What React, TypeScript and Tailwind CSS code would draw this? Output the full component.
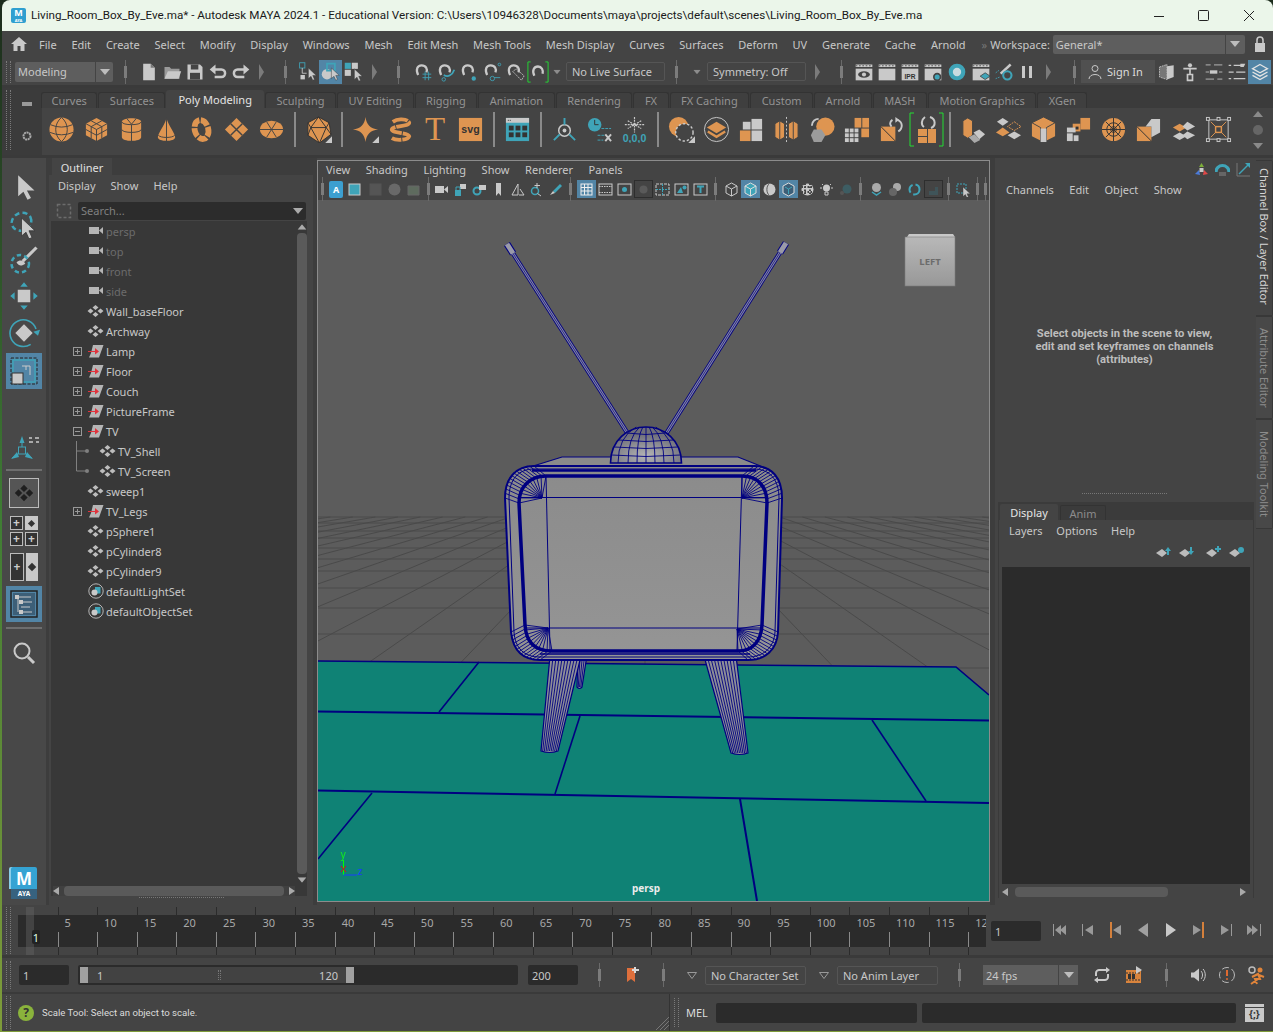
import type { ReactNode } from 'react';

const OR = '#de9551';
const GR = '#c9c9c9';
const TE = '#3fa4b8';
const BG = '#444444';
const NAVY = '#000080';

const Ic = ({ s = 20, vb = 24, children }: { s?: number; vb?: number; children: ReactNode }) => (
  <svg width={s} height={s} viewBox={`0 0 ${vb} ${vb}`} fill="none" className="shrink-0">
    {children}
  </svg>
);

const Sep = ({ className = '' }: { className?: string }) => (
  <div className={`flex h-[24px] w-[5px] shrink-0 items-center justify-center ${className}`}>
    <div className="relative flex h-full w-px items-center justify-center bg-[#6a6a6a]">
      <div className="absolute h-[12px] w-[3px] bg-[#7c7c7c]" />
    </div>
  </div>
);

const Grip = ({ className = '' }: { className?: string }) => (
  <div className={`w-[5px] shrink-0 border-x border-dotted border-[#7a7a7a] ${className}`} />
);

const Chevron = ({ className = '' }: { className?: string }) => (
  <svg width="6" height="18" viewBox="0 0 6 18" className={`shrink-0 ${className}`}>
    <path d="M0 1 L5 9 L0 17 Z" fill="#7b7b7b" />
  </svg>
);

const DownTri = ({ className = '', c = '#8c8c8c' }: { className?: string; c?: string }) => (
  <svg width="10" height="6" viewBox="0 0 10 6" className={`shrink-0 ${className}`}>
    <path d="M0 0 H10 L5 6 Z" fill={c} />
  </svg>
);

const Cursor = ({ x = 10, y = 9, k = 1 }: { x?: number; y?: number; k?: number }) => (
  <path transform={`translate(${x} ${y}) scale(${k})`} d="M0 0 L0 12 L3 9.5 L5 14 L7 13 L5 8.5 L9 8.5 Z" fill={GR} stroke="#333" strokeWidth=".5" />
);

const Magnet = ({ extra }: { extra?: ReactNode }) => (
  <Ic s={21}>
    <path d="M7 16 C4 10 6 5 11 5 C16 5 18 9 16.5 13" stroke={GR} strokeWidth="2.6" />
    {extra}
  </Ic>
);

const Clap = ({ children }: { children?: ReactNode }) => (
  <Ic s={20}>
    <rect x="2" y="3" width="20" height="3" fill={GR} strokeDasharray="2 2" />
    <path d="M2 4.5 H22" stroke="#444" strokeWidth="1" strokeDasharray="2 2" />
    <rect x="2" y="8" width="20" height="14" fill={GR} />
    {children}
  </Ic>
);

const statusIcons: Record<string, ReactNode> = {
  file: (
    <Ic s={20}>
      <path d="M5 2 H14 L19 7 V22 H5 Z" fill={GR} />
      <path d="M14 2 V7 H19" fill="#777" />
    </Ic>
  ),
  folder: (
    <Ic s={20}>
      <path d="M3 6 H9 L11 8 H21 V20 H3 Z" fill="#9a9a9a" />
      <path d="M3 20 L7 11 H23 L20 20 Z" fill={GR} />
    </Ic>
  ),
  save: (
    <Ic s={20}>
      <path d="M3 3 H18 L21 6 V21 H3 Z" fill={GR} />
      <rect x="7" y="3" width="9" height="6" fill="#444" />
      <rect x="6" y="13" width="12" height="8" fill="#444" />
    </Ic>
  ),
  undo: (
    <Ic s={20}>
      <path d="M7 9 H16 C22 9 22 18 16 18 H8" stroke={GR} strokeWidth="3" />
      <path d="M9 3 L2 9 L9 15 Z" fill={GR} />
    </Ic>
  ),
  redo: (
    <Ic s={20}>
      <path d="M17 9 H8 C2 9 2 18 8 18 H16" stroke={GR} strokeWidth="3" />
      <path d="M15 3 L22 9 L15 15 Z" fill={GR} />
    </Ic>
  ),
};

const ShelfTri = () => <path d="M28 21 V28 H21 Z" fill={GR} />;

const shelf: Record<string, ReactNode> = {
  sphere: (
    <>
      <circle cx="14" cy="14" r="12.5" fill={OR} />
      <path d="M14 1.5 C6 8 6 20 14 26.5 M14 1.5 C22 8 22 20 14 26.5 M2.5 9 Q14 14 25.5 9 M2 17 Q14 22 26 17" stroke={BG} />
    </>
  ),
  cube: (
    <>
      <path d="M14 2 L25 8 V20 L14 26 L3 20 V8 Z" fill={OR} />
      <path d="M3 8 L14 14 L25 8 M14 14 V26 M8.5 5 L19.5 11 V23 M19.5 5 L8.5 11 V23 M3 14 L14 20 L25 14" stroke={BG} />
    </>
  ),
  cyl: (
    <>
      <path d="M4 6 C4 1 24 1 24 6 V22 C24 27 4 27 4 22 Z" fill={OR} />
      <path d="M4 6 C4 10 24 10 24 6 M4 14 C4 18 24 18 24 14 M14 9 V26 M9 2.5 L14 8.5 L19 2.5" stroke={BG} />
    </>
  ),
  cone: (
    <>
      <path d="M14 2 C12 10 5 18 5 22 C5 27 23 27 23 22 C23 18 16 10 14 2 Z" fill={OR} />
      <path d="M14 2 V26 M5.5 20 C8 23 20 23 22.5 20" stroke={BG} />
    </>
  ),
  torus: <ellipse cx="14" cy="14" rx="7" ry="10" stroke={OR} strokeWidth="6" strokeDasharray="9 1.5" transform="rotate(-15 14 14)" />,
  plane: (
    <>
      <path d="M14 2 L26 14 L14 26 L2 14 Z" fill={OR} />
      <path d="M8 8 L20 20 M20 8 L8 20" stroke={BG} strokeWidth="1.5" />
    </>
  ),
  disc: (
    <>
      <ellipse cx="14" cy="14" rx="12" ry="9" fill={OR} />
      <path d="M2 14 H26 M9 6 L19 22 M19 6 L9 22" stroke={BG} />
    </>
  ),
  platonic: (
    <>
      <path d="M14 1 L25 7 L27 19 L15 28 L3 20 L3 7 Z" fill={OR} stroke="#333" />
      <path d="M14 1 L6 12 L22 12 Z M6 12 L15 28 L22 12 M3 7 L6 12 M25 7 L22 12 M3 20 L6 12 M27 19 L22 12" stroke="#333" />
      <ShelfTri />
    </>
  ),
  star: (
    <>
      <path d="M14 1 C15 9 19 13 27 14 C19 15 15 19 14 27 C13 19 9 15 1 14 C9 13 13 9 14 1 Z" fill={OR} />
      <ShelfTri />
    </>
  ),
  helix: <path d="M6 6 C12 2 22 3 23 7 C23 11 6 10 5 14 C5 18 22 17 23 21 C22 25 10 26 5 23" stroke={OR} strokeWidth="4" strokeDasharray="16 1" />,
  svg: (
    <>
      <rect x="2" y="2" width="24" height="24" fill={OR} />
      <text x="14" y="18" textAnchor="middle" fill="#333" fontSize="11" fontWeight="700" fontFamily="'Liberation Sans', sans-serif">
        svg
      </text>
    </>
  ),
  win: (
    <>
      <rect x="2" y="2" width="24" height="24" fill={TE} />
      <rect x="2" y="2" width="24" height="5" fill={GR} />
      <path d="M4 4.5 H8" stroke="#333" strokeDasharray="1 1" />
      {[5, 12, 19].map((x) => [10, 17].map((y) => <rect key={`${x}${y}`} x={x} y={y} width="5" height="5" fill="#333" />))}
    </>
  ),
  joint: (
    <>
      <circle cx="14" cy="15" r="6" stroke={GR} strokeWidth="1.5" />
      <circle cx="14" cy="15" r="2" fill={GR} />
      <path d="M14 2 V9 M9 19 L3 25 M19 19 L25 25" stroke={TE} strokeWidth="2" />
    </>
  ),
  clock: (
    <>
      <circle cx="9" cy="9" r="7" fill={TE} />
      <path d="M9 4 V9 H13" stroke="#333" />
      <path d="M16 13 H26 M12 20 H19 M12 25 H18" stroke={TE} strokeDasharray="3 1" />
      <path d="M20 19 L26 26 M26 19 L20 26" stroke={GR} strokeWidth="2" />
    </>
  ),
  snow: (
    <>
      <path d="M14 1 V17 M7 5 L21 13 M21 5 L7 13 M4 9 H24" stroke={GR} strokeWidth="1.2" strokeDasharray="2 1" />
      <text x="14" y="27" textAnchor="middle" fill={TE} fontSize="11" fontWeight="700" fontFamily="'Liberation Sans', sans-serif">
        0,0,0
      </text>
    </>
  ),
  circ: (
    <>
      <circle cx="11" cy="11" r="10" fill={OR} />
      <circle cx="17" cy="17" r="9" fill={BG} stroke={GR} strokeWidth="1.5" strokeDasharray="2.5 2" />
      <ShelfTri />
    </>
  ),
  stackC: (
    <>
      <circle cx="14" cy="14" r="12.5" stroke={GR} />
      <path d="M14 6 L24 12 L14 18 L4 12 Z" fill={OR} />
      <path d="M5 16 L14 21.5 L23 16" stroke={OR} strokeWidth="2.5" />
    </>
  ),
  quad: (
    <>
      <rect x="14" y="3" width="11" height="11" fill={GR} />
      <rect x="14" y="15" width="11" height="11" fill={GR} />
      <rect x="2" y="15" width="11" height="11" fill={OR} />
      <rect x="5" y="6" width="8" height="8" fill={GR} />
    </>
  ),
  split: (
    <>
      <path d="M2 8 L7 5 L12 8 V22 L7 25 L2 22 Z" fill={OR} stroke={BG} />
      <path d="M7 5 V25" stroke={BG} />
      <path d="M16 8 L21 5 L26 8 V22 L21 25 L16 22 Z" fill={OR} stroke={BG} />
      <path d="M21 5 V25" stroke={BG} />
      <path d="M14 1 V27" stroke={GR} strokeDasharray="2 2" />
    </>
  ),
  bool: (
    <>
      <circle cx="18" cy="11" r="9.5" fill={OR} />
      <path d="M6 14 H14 L18 20 L14 27 H6 L3 20 Z" fill="#9c9c9c" />
      <path d="M4 10 C4 5 8 3 11 3" stroke={GR} strokeWidth="2" />
    </>
  ),
  smooth: (
    <>
      <g fill={GR}>
        {[3, 8, 13].map((x) => [14, 19, 24].map((y) => <rect key={`${x}${y}`} x={x - 1} y={y - 1} width="4" height="4" />))}
      </g>
      <rect x="12" y="2" width="7" height="10" fill={OR} />
      <rect x="20" y="2" width="7" height="10" fill={OR} />
      <rect x="19" y="13" width="8" height="9" fill={OR} />
    </>
  ),
  tri: (
    <>
      <rect x="3" y="11" width="15" height="15" fill={OR} />
      <path d="M3 11 L18 26" stroke="#333" />
      <path d="M20 4 C26 6 26 13 21 16 M15 4 C12 6 12 9 14 11" stroke={GR} strokeWidth="2" />
      <path d="M18 1 L22 4 L18 7 Z" fill={GR} />
    </>
  ),
  extrude: (
    <>
      <path d="M3 5 L8 2 L13 5 V20 L8 23 L3 20 Z" fill={OR} stroke={BG} />
      <path d="M14 17 L20 14 L26 19 L20 24 Z" fill={GR} />
      <path d="M9 22 L15 19 L21 25 L15 28 Z" fill="#aaa" />
    </>
  ),
  bridge: (
    <>
      <path d="M8 2 L14 6 L8 10 L2 6 Z" fill={GR} />
      <path d="M20 6 L27 11 L20 15 L13 11 Z" stroke={OR} strokeDasharray="2 1" />
      <path d="M8 12 L15 17 L8 21 L1 17 Z" fill={OR} />
      <path d="M20 16 L27 20 L20 24 L13 20 Z" fill={GR} />
    </>
  ),
  bevel: (
    <>
      <path d="M14 1 L26 7 V21 L14 27 L2 21 V7 Z" fill={OR} />
      <path d="M2 7 L11 12 V27 L14 27 L17 27 V12 L26 7 L14 1 Z" fill="none" stroke={BG} />
      <rect x="11" y="13" width="6" height="14" fill={GR} />
    </>
  ),
  merge: (
    <>
      <rect x="16" y="2" width="10" height="12" fill={OR} />
      <rect x="8" y="8" width="8" height="8" fill={OR} />
      <g fill={GR}>
        <rect x="2" y="12" width="9" height="5" />
        <rect x="2" y="18" width="6" height="8" />
        <rect x="9" y="20" width="5" height="6" />
      </g>
      <rect x="11" y="11" width="3" height="3" fill="#333" />
    </>
  ),
  web: (
    <>
      <circle cx="14" cy="14" r="12" fill={OR} />
      <circle cx="14" cy="14" r="7" stroke="#333" />
      <circle cx="14" cy="14" r="3" stroke="#333" />
      <path d="M2 14 H26 M14 2 V26 M6 6 L22 22 M22 6 L6 22" stroke="#333" />
    </>
  ),
  wedge: (
    <>
      <rect x="2" y="11" width="15" height="15" fill={OR} />
      <path d="M2 11 L17 26" stroke="#333" />
      <path d="M11 11 L17 3 H26 V17 L17 22 V11 Z" fill={GR} />
    </>
  ),
  stack: (
    <>
      <path d="M10 8 L17 12 L10 16 L3 12 Z" fill={OR} />
      <path d="M18 6 L26 11 L18 15 L13 11 Z" fill={GR} />
      <path d="M10 17 L17 21 L10 25 L3 21 Z" fill={GR} />
      <path d="M18 16 L26 20 L18 24 L13 20 Z" fill={GR} />
    </>
  ),
  frame: (
    <>
      <rect x="4" y="4" width="20" height="20" stroke={GR} />
      {[3, 14, 25].map((x) => [3, 25].map((y) => <rect key={`${x}${y}`} x={x - 1.5} y={y - 1.5} width="3" height="3" fill={BG} stroke={GR} />))}
      <path d="M6 6 L11 11 M22 6 L17 11 M6 22 L11 17 M22 22 L17 17" stroke={OR} />
      <rect x="11" y="11" width="6" height="6" stroke={OR} strokeWidth="1.5" />
    </>
  ),
};

const S = ({ id, className = '' }: { id: string; className?: string }) => (
  <div className={`flex h-[35px] w-[35px] shrink-0 items-center justify-center ${className}`}>
    <Ic s={27} vb={28}>
      {shelf[id]}
    </Ic>
  </div>
);

const ShelfSep = () => <div className="mx-[5px] h-[35px] w-[2px] shrink-0 bg-[#8a8a8a]" />;

const menus = ['File', 'Edit', 'Create', 'Select', 'Modify', 'Display', 'Windows', 'Mesh', 'Edit Mesh', 'Mesh Tools', 'Mesh Display', 'Curves', 'Surfaces', 'Deform', 'UV', 'Generate', 'Cache', 'Arnold'];

const tabs = ['Curves', 'Surfaces', 'Poly Modeling', 'Sculpting', 'UV Editing', 'Rigging', 'Animation', 'Rendering', 'FX', 'FX Caching', 'Custom', 'Arnold', 'MASH', 'Motion Graphics', 'XGen'];

const Slot = ({ children, w = 23, on = false, className = '' }: { children: ReactNode; w?: number; on?: boolean; className?: string }) => (
  <div style={{ width: w }} className={`flex h-[24px] shrink-0 items-center justify-center ${on ? 'bg-[#5285a6]' : ''} ${className}`}>
    {children}
  </div>
);

const TitleBar = () => (
  <div className="flex h-[31px] shrink-0 items-center rounded-t-lg bg-[#ebf6ea] pl-[9px] text-[11.65px] text-[#1a1a1a]">
    <div className="flex h-[15px] w-[15px] flex-col items-center rounded-[2px] bg-[#2f9fd0] font-bold text-white">
      <span className="text-[9px] leading-[10px]">M</span>
      <span className="text-[4px] leading-[5px]">AYA</span>
    </div>
    <span className="ml-[5px] whitespace-nowrap" style={{ fontFamily: 'Roboto, sans-serif' }}>
      Living_Room_Box_By_Eve.ma* - Autodesk MAYA 2024.1 - Educational Version: C:\Users\10946328\Documents\maya\projects\default\scenes\Living_Room_Box_By_Eve.ma
    </span>
    <svg width="100" height="14" viewBox="0 0 100 14" className="ml-auto mr-[19px] shrink-0">
      <path d="M0 7.5 H10" stroke="#222" />
      <rect x="44.5" y="1.5" width="10" height="10" rx="1" stroke="#222" fill="none" />
      <path d="M90 1 L101 12 M101 1 L90 12" stroke="#222" />
    </svg>
  </div>
);

const MenuBar = () => (
  <div className="flex h-[28px] shrink-0 items-center pb-[2px] pl-[9px] text-[#c8c8c8]">
    <svg width="16" height="16" viewBox="0 0 16 16" className="shrink-0">
      <path d="M8 1 L16 8 H13.5 V15 H9.5 V10 H6.5 V15 H2.5 V8 H0 Z" fill={GR} />
    </svg>
    <div className="ml-[12px] flex gap-[14.8px]">
      {menus.map((m) => (
        <span key={m} className="whitespace-nowrap">
          {m}
        </span>
      ))}
    </div>
    <span className="ml-[16px] text-[#777]">»</span>
    <span className="ml-[3px]">Workspace:</span>
    <div className="ml-[3px] flex h-[19px] w-[192px] items-center rounded-[2px] bg-[#5e5e5e] pl-[3px]">
      General*
      <div className="ml-auto flex h-full w-[20px] items-center justify-center border-l border-[#444]">
        <DownTri c="#bdbdbd" />
      </div>
    </div>
    <svg width="12" height="18" viewBox="0 0 12 18" className="ml-[9px]">
      <path d="M3 8 V5 C3 1 9 1 9 5 V8" stroke={GR} strokeWidth="1.6" fill="none" />
      <rect x="1" y="8" width="10" height="9" fill={GR} />
    </svg>
  </div>
);

const Outlined = ({ w, children }: { w: number; children: ReactNode }) => (
  <div style={{ width: w }} className="flex h-[19px] shrink-0 items-center rounded-[2px] border border-[#555] pl-[5px] whitespace-nowrap text-[#c8c8c8]">
    {children}
  </div>
);

const StatusBar = () => (
  <div className="flex h-[26px] shrink-0 items-center pb-[1px] pl-[4px] text-[#c8c8c8]">
    <Grip className="h-[22px]" />
    <div className="ml-[4px] flex h-[20px] w-[98px] shrink-0 items-center rounded-[2px] bg-[#5e5e5e] pl-[3px]">
      Modeling
      <div className="ml-auto flex h-full w-[18px] items-center justify-center border-l border-[#444]">
        <DownTri c="#bdbdbd" />
      </div>
    </div>
    <Sep className="ml-[10px]" />
    <div className="ml-[9px] flex">
      {['file', 'folder', 'save', 'undo', 'redo'].map((k) => (
        <Slot key={k}>{statusIcons[k]}</Slot>
      ))}
    </div>
    <Chevron className="ml-[7px]" />
    <Sep className="ml-[18px]" />
    <div className="ml-[8px] flex">
      <Slot>
        <Ic s={21}>
          <rect x="3" y="2" width="6" height="6" stroke={TE} />
          <path d="M6 8 V14 H11" stroke={GR} />
          <rect x="4" y="16" width="5" height="5" fill={GR} />
          <Cursor x={13} y={8} />
        </Ic>
      </Slot>
      <Slot on>
        <Ic s={21}>
          <circle cx="8" cy="15" r="6" fill={GR} />
          <rect x="8" y="3" width="9" height="8" stroke={TE} strokeWidth="2" />
          <Cursor x={13} y={8} />
        </Ic>
      </Slot>
      <Slot>
        <Ic s={21}>
          <rect x="2" y="2" width="7" height="7" fill={TE} />
          <rect x="10" y="2" width="7" height="7" fill={GR} />
          <rect x="2" y="10" width="7" height="7" fill={GR} />
          <Cursor x={13} y={9} />
        </Ic>
      </Slot>
    </div>
    <Chevron className="ml-[7px]" />
    <Sep className="ml-[18px]" />
    <div className="ml-[10px] flex">
      <Slot>
        <Magnet extra={<path d="M12 15 H22 M12 19 H22 M15 12 V22 M19 12 V22" stroke={TE} />} />
      </Slot>
      <Slot>
        <Magnet extra={<><path d="M10 16 C15 19 20 16 22 10" stroke={TE} strokeWidth="2" /><circle cx="10" cy="21" r="2" stroke={TE} /></>} />
      </Slot>
      <Slot>
        <Magnet extra={<circle cx="18" cy="20" r="2.5" fill={TE} />} />
      </Slot>
      <Slot>
        <Magnet extra={<><circle cx="21" cy="4" r="1.5" stroke={TE} /><circle cx="13" cy="20" r="2.5" stroke={TE} /><path d="M15 19 H22" stroke={TE} /></>} />
      </Slot>
      <Slot>
        <Magnet extra={<path d="M10 12 L20 22 L23 17 L14 9 Z" stroke={GR} strokeDasharray="2 1" />} />
      </Slot>
      <Slot>
        <Ic s={22}>
          <path d="M8 16 C5 10 8 6 12 6 C16 6 18 10 17 14" stroke={GR} strokeWidth="2.5" />
          <path d="M4 1 H1 V23 H4 M20 1 H23 V23 H20" stroke="#22dd33" />
        </Ic>
      </Slot>
    </div>
    <DownTri className="ml-[3px] scale-75" />
    <div className="ml-[4px]">
      <Outlined w={99}>No Live Surface</Outlined>
    </div>
    <Sep className="ml-[9px]" />
    <DownTri className="ml-[13px] scale-75" />
    <div className="ml-[5px]">
      <Outlined w={99}>Symmetry: Off</Outlined>
    </div>
    <Chevron className="ml-[9px]" />
    <Sep className="ml-[18px]" />
    <div className="ml-[8px] flex">
      {['eye', 'plain', 'ipr', 'gear'].map((k) => (
        <Slot key={k}>
          <Clap>
            {k === 'eye' && (
              <>
                <ellipse cx="12" cy="15" rx="7" ry="4" fill="#444" />
                <circle cx="12" cy="15" r="2.5" fill={GR} />
              </>
            )}
            {k === 'ipr' && (
              <text x="12" y="20" textAnchor="middle" fontSize="8" fontWeight="700" fill="#333" fontFamily="'Liberation Sans', sans-serif">
                IPR
              </text>
            )}
            {k === 'gear' && <circle cx="17" cy="18" r="4" fill={TE} stroke="#444" strokeWidth="2" />}
          </Clap>
        </Slot>
      ))}
      <Slot w={25}>
        <Ic s={20}>
          <circle cx="12" cy="12" r="10" fill={TE} />
          <circle cx="12" cy="12" r="5" fill="#c9dbe0" />
        </Ic>
      </Slot>
      <Slot>
        <Clap>
          <path d="M17 13 L23 17 L17 21 L11 17 Z" fill={TE} stroke="#444" />
        </Clap>
      </Slot>
      <Slot>
        <Ic s={20}>
          <path d="M8 14 L20 3" stroke={GR} strokeWidth="3" />
          <circle cx="16" cy="16" r="5" stroke={TE} strokeWidth="2.5" />
          <path d="M2 13 L6 10 M2 20 L7 18" stroke={TE} strokeDasharray="2 1" />
        </Ic>
      </Slot>
      <Slot>
        <div className="flex gap-[4px]">
          <div className="h-[12px] w-[3px] bg-[#c9c9c9]" />
          <div className="h-[12px] w-[3px] bg-[#c9c9c9]" />
        </div>
      </Slot>
    </div>
    <Chevron className="ml-[8px]" />
    <Sep className="ml-[20px]" />
    <div className="ml-[4px] flex h-[23px] w-[74px] shrink-0 items-center gap-[5px] bg-[#505050] pl-[7px] text-[#dcdcdc]">
      <svg width="14" height="16" viewBox="0 0 14 16">
        <circle cx="7" cy="4.5" r="3" stroke={GR} fill="none" />
        <path d="M1 15 C1 9 13 9 13 15" stroke={GR} fill="none" />
      </svg>
      Sign In
    </div>
    <div className="flex">
      <Slot>
        <Ic s={20}>
          <path d="M3 6 L12 3 V21 L3 18 Z" stroke={GR} strokeDasharray="2 1" fill="#777" />
          <path d="M12 5 L20 4 V18 L12 21 Z" fill={GR} />
        </Ic>
      </Slot>
      <Slot w={24}>
        <Ic s={20}>
          <circle cx="12" cy="4" r="2.5" fill={GR} />
          <path d="M4 8 H20 M12 8 V15 M9 15 H15 V22 H9 Z" stroke={GR} strokeWidth="2" />
        </Ic>
      </Slot>
      <Slot>
        <Ic s={20}>
          <path d="M2 3.5 H8 M12 3.5 H22 M2 12 H6 M18 12 H22 M2 20.5 H12 M16 20.5 H22" stroke={GR} />
          <rect x="7" y="10" width="9" height="4" fill={GR} />
        </Ic>
      </Slot>
      <Slot>
        <Ic s={20}>
          <path d="M2 4 H5 M8 4 H20 M2 12 H8 M11 12 H22 M2 20 H5 M8 20 H22" stroke={GR} strokeWidth="1.5" />
          <path d="M16 2 H22 L20 6 H16 Z" fill={GR} />
        </Ic>
      </Slot>
      <Slot on>
        <Ic s={20}>
          <path d="M12 3 L21 8 L12 13 L3 8 Z M3 12 L12 17 L21 12 M3 16 L12 21 L21 16" stroke="#e4e4e4" strokeWidth="1.5" />
        </Ic>
      </Slot>
    </div>
  </div>
);

const tabPad: Record<string, string> = {
  Curves: 'px-[9.5px]',
  'Poly Modeling': 'px-[12px]',
};

const Shelf = () => (
  <div className="flex h-[67px] shrink-0 items-stretch bg-[#3b3b3b] pt-[2px] pl-[4px]">
    <Grip className="mb-[5px]" />
    <div className="ml-[5px] mb-[5px] flex w-[21px] shrink-0 flex-col items-center justify-between pt-[12px] pb-[8px]">
      <div className="h-[4px] w-[10px] bg-[#999]" />
      <svg width="12" height="12" viewBox="0 0 12 12">
        <circle cx="6" cy="6" r="3.5" stroke="#aaa" strokeWidth="2" fill="none" strokeDasharray="2 .6" />
      </svg>
    </div>
    <div className="ml-[5px] flex min-w-0 flex-1 flex-col">
      <div className="-ml-[1px] flex h-[18px] shrink-0 items-end gap-[1px] overflow-hidden">
        {tabs.map((t) => (
          <div
            key={t}
            className={`flex shrink-0 items-center justify-center rounded-t-[3px] whitespace-nowrap ${tabPad[t] ?? 'px-[10.5px]'} ${
              t === 'Poly Modeling' ? 'h-[18px] bg-[#444] text-[#e4e4e4]' : 'h-[16px] border border-b-0 border-[#333] bg-[#3f3f3f] text-[#939393]'
            }`}
          >
            {t}
          </div>
        ))}
      </div>
      <div className="flex flex-1 items-center bg-[#444] pb-[4px]">
        <S id="sphere" className="ml-[1.5px]" />
        <S id="cube" />
        <S id="cyl" />
        <S id="cone" />
        <S id="torus" />
        <S id="plane" />
        <S id="disc" />
        <ShelfSep />
        <S id="platonic" />
        <ShelfSep />
        <S id="star" />
        <S id="helix" />
        <div className="flex h-[35px] w-[35px] shrink-0 items-center justify-center text-[33px] leading-[35px] text-[#de9551]" style={{ fontFamily: "'Liberation Serif', serif" }}>
          T
        </div>
        <S id="svg" />
        <ShelfSep />
        <S id="win" />
        <ShelfSep />
        <S id="joint" />
        <S id="clock" />
        <S id="snow" />
        <ShelfSep />
        <S id="circ" />
        <S id="stackC" />
        <S id="quad" />
        <S id="split" />
        <S id="bool" />
        <S id="smooth" />
        <S id="tri" />
        <div className="flex h-[35px] w-[35px] shrink-0 items-center justify-center">
          <Ic s={35} vb={35}>
            <rect x="9" y="17" width="9" height="7" fill={OR} />
            <rect x="9" y="25" width="9" height="6" fill={OR} />
            <rect x="19" y="17" width="8" height="14" fill={OR} />
            <path d="M21 5 C27 7 27 14 22 16 M16 5 C12 8 12 13 15 15" stroke={GR} strokeWidth="2" />
            <path d="M1 1 H5 M1 1 V34 M1 34 H5 M34 1 H30 M34 1 V34 M34 34 H30" stroke="#22dd33" strokeWidth="1" />
          </Ic>
        </div>
        <ShelfSep />
        <S id="extrude" />
        <S id="bridge" />
        <S id="bevel" />
        <S id="merge" />
        <S id="web" />
        <S id="wedge" />
        <S id="stack" />
        <S id="frame" />
        <div className="ml-[16px] flex h-[38px] w-[12px] flex-col items-center justify-between">
          <DownTri className="rotate-180" c="#8a8a8a" />
          <div className="h-[10px] w-[10px] rounded-full bg-[#666]" />
          <DownTri c="#8a8a8a" />
        </div>
      </div>
    </div>
  </div>
);

const Tool = ({ on, children, className = '', h = 36 }: { on?: boolean; children: ReactNode; className?: string; h?: number }) => (
  <div style={{ height: h }} className={`flex w-[36px] shrink-0 items-center justify-center ${on ? 'bg-[#5285a6]' : ''} ${className}`}>
    {children}
  </div>
);

const ToolSep = ({ className = '' }: { className?: string }) => <div className={`h-[2px] w-[36px] shrink-0 bg-[#6e6e6e] ${className}`} />;

const Toolbox = () => (
  <div className="flex w-[44px] shrink-0 flex-col items-center bg-[#484848] pt-[11px]">
    <Tool>
      <Ic s={28}>
        <path d="M7 2 V20 L11.5 16 L15 23 L18 21.5 L14.5 15 H21 Z" fill={GR} />
      </Ic>
    </Tool>
    <Tool h={39} className="-mt-[2px]">
      <Ic s={30}>
        <ellipse cx="10" cy="11" rx="8" ry="7" stroke={TE} strokeWidth="2" strokeDasharray="4 2.5" transform="rotate(-25 10 11)" />
        <Cursor x={10} y={8} k={1.2} />
      </Ic>
    </Tool>
    <Tool h={36}>
      <Ic s={30}>
        <path d="M11 13 L22 2" stroke={GR} strokeWidth="2.5" />
        <path d="M6 14 C9 11 12 13 13 15 C10 17 8 17 6 14 Z" fill={GR} />
        <ellipse cx="9" cy="15" rx="7" ry="7" stroke={TE} strokeWidth="2" strokeDasharray="3.5 2.5" />
      </Ic>
    </Tool>
    <Tool h={35}>
      <Ic s={30}>
        <rect x="7" y="7" width="10" height="10" fill={GR} />
        <path d="M12 1 L15 4.5 H9 Z M12 23 L15 19.5 H9 Z M1 12 L4.5 9 V15 Z M23 12 L19.5 9 V15 Z" fill={TE} />
      </Ic>
    </Tool>
    <Tool h={39}>
      <Ic s={32}>
        <path d="M17 20.5 A10 10 0 1 1 21 9" stroke={TE} strokeWidth="1.2" />
        <path d="M19 11 L22.5 14 L24 9.5 Z" fill={TE} />
        <path d="M12 5.5 L18.5 12 L12 18.5 L5.5 12 Z" fill={GR} />
      </Ic>
    </Tool>
    <Tool on h={36} className="mt-[1px]">
      <Ic s={32} vb={32}>
        <rect x="3" y="3" width="26" height="26" stroke="#222" strokeDasharray="3 1.5" />
        <rect x="5" y="5" width="22" height="22" stroke={TE} strokeWidth="1.5" />
        <path d="M14 11 H22 V20 M18 15 V11" stroke={GR} strokeWidth="1" />
        <rect x="4" y="18" width="11" height="11" fill={GR} stroke="#333" />
      </Ic>
    </Tool>
    <div className="mt-[41px]" />
    <Tool h={38}>
      <Ic s={32} vb={32}>
        <path d="M14 3 L16.5 10 H11.5 Z M3 26 L9 19 L11 24 Z M25 26 L19 19 L17 24 Z" fill={TE} />
        <path d="M14 9 V14 M10 21 L4 25 M18 21 L24 25" stroke={TE} />
        <rect x="10.5" y="14" width="7" height="7" stroke={TE} />
        <path d="M21 5 H24 M27 5 H31 M21 9 H25 M28 9 H31" stroke={GR} strokeWidth="1.5" />
      </Ic>
    </Tool>
    <ToolSep className="mt-[1px]" />
    <div className="mt-[8px] flex h-[28px] w-[28px] items-center justify-center bg-[#555] outline outline-1 outline-[#bbb]">
      <Ic s={22}>
        <path d="M12 3 L16 7 L12 11 L8 7 Z M12 13 L16 17 L12 21 L8 17 Z M6 8 L10 12 L6 16 L2 12 Z M18 8 L22 12 L18 16 L14 12 Z" fill="#1f1f1f" />
      </Ic>
    </div>
    <div className="mt-[9px] grid h-[28px] w-[28px] grid-cols-2 gap-[2px]">
      {[0, 1, 2, 3].map((i) => (
        <div key={i} className={`flex items-center justify-center text-[12px] leading-none font-bold ${i === 1 ? 'bg-[#c8c8c8] text-[#333]' : 'border border-[#bbb] bg-[#333] text-[#ccc]'}`}>
          {i === 1 ? <div className="h-[5px] w-[5px] rotate-45 bg-[#333]" /> : '+'}
        </div>
      ))}
    </div>
    <div className="mt-[9px] flex h-[28px] w-[28px] gap-[2px]">
      <div className="flex flex-1 items-center justify-center border border-[#bbb] bg-[#333] text-[12px] font-bold text-[#ccc]">+</div>
      <div className="flex flex-1 items-center justify-center bg-[#c8c8c8]">
        <div className="h-[6px] w-[6px] rotate-45 bg-[#333]" />
      </div>
    </div>
    <Tool on h={36} className="mt-[5px]">
      <Ic s={30} vb={30}>
        <rect x="2" y="2" width="26" height="26" stroke="#222" strokeWidth="1.5" />
        <rect x="4" y="4" width="22" height="22" fill="#3d5f78" />
        <path d="M8 8 H22 M12 13 H23 M12 18 H21 M12 23 H23 M9 8 V23" stroke={GR} />
        <rect x="6" y="6" width="4" height="4" fill={GR} />
        <rect x="10" y="11" width="4" height="4" fill={GR} />
        <rect x="10" y="21" width="4" height="4" fill={GR} />
      </Ic>
    </Tool>
    <ToolSep className="mt-[5px]" />
    <div className="mt-[12px]">
      <Ic s={24}>
        <circle cx="10" cy="10" r="7.5" stroke={GR} strokeWidth="2" />
        <path d="M16 16 L22 22" stroke={GR} strokeWidth="3" />
      </Ic>
    </div>
    <div className="mt-auto mb-[6px] flex flex-col items-center">
      <div className="flex h-[22px] w-[26px] items-center justify-center rounded-t-[2px] bg-[#35a3d3] text-[17px] font-bold text-white shadow-[-2px_0_0_#8bcde8]">M</div>
      <div className="h-[10px] w-[26px] bg-[#37627f] text-center text-[6.5px] leading-[10px] font-bold text-white">AYA</div>
    </div>
  </div>
);

const outlinerIcon = {
  cam: (
    <svg width="16" height="10" viewBox="0 0 16 10">
      <rect x="1" y="1" width="10" height="7" fill="#b5b5b5" />
      <path d="M11 4.5 L15 1 V8 Z" fill="#b5b5b5" />
    </svg>
  ),
  mesh: (
    <svg width="17" height="12" viewBox="0 0 17 12">
      <path d="M8.5 0 L11.5 2.5 L8.5 5 L5.5 2.5 Z M8.5 7 L11.5 9.5 L8.5 12 L5.5 9.5 Z M3.5 3.5 L6.5 6 L3.5 8.5 L0.5 6 Z M13.5 3.5 L16.5 6 L13.5 8.5 L10.5 6 Z" fill="#bcbcbc" />
    </svg>
  ),
  group: (
    <svg width="16" height="13" viewBox="0 0 16 13">
      <path d="M5 0 H15.5 L11 12.5 H1 L3 8 Z" fill="#b5b5b5" />
      <path d="M0 6.5 H9" stroke="#e0323c" strokeWidth="1" />
      <path d="M7 3 L11 6.5 L7 9.5 Z" fill="#e0323c" />
    </svg>
  ),
  set: (
    <svg width="16" height="16" viewBox="0 0 16 16">
      <circle cx="8" cy="8" r="7.2" stroke="#b5b5b5" fill="none" />
      <rect x="7" y="4" width="5.5" height="6.5" fill={TE} />
      <circle cx="6.5" cy="9.5" r="3" fill="#c9c9c9" />
    </svg>
  ),
};

type Row = { n: string; i: keyof typeof outlinerIcon; dim?: boolean; exp?: '+' | '-'; child?: 'mid' | 'last' };

const rows: Row[] = [
  { n: 'persp', i: 'cam', dim: true },
  { n: 'top', i: 'cam', dim: true },
  { n: 'front', i: 'cam', dim: true },
  { n: 'side', i: 'cam', dim: true },
  { n: 'Wall_baseFloor', i: 'mesh' },
  { n: 'Archway', i: 'mesh' },
  { n: 'Lamp', i: 'group', exp: '+' },
  { n: 'Floor', i: 'group', exp: '+' },
  { n: 'Couch', i: 'group', exp: '+' },
  { n: 'PictureFrame', i: 'group', exp: '+' },
  { n: 'TV', i: 'group', exp: '-' },
  { n: 'TV_Shell', i: 'mesh', child: 'mid' },
  { n: 'TV_Screen', i: 'mesh', child: 'last' },
  { n: 'sweep1', i: 'mesh' },
  { n: 'TV_Legs', i: 'group', exp: '+' },
  { n: 'pSphere1', i: 'mesh' },
  { n: 'pCylinder8', i: 'mesh' },
  { n: 'pCylinder9', i: 'mesh' },
  { n: 'defaultLightSet', i: 'set' },
  { n: 'defaultObjectSet', i: 'set' },
];

const Outliner = () => (
  <div className="flex w-[264px] shrink-0 flex-col">
    <div className="flex h-[17px] shrink-0 items-end bg-[#3d3d3d] pl-[3px]">
      <div className="flex h-[17px] w-[60px] items-center justify-center bg-[#444] pt-[2px] text-[#e0e0e0]">Outliner</div>
    </div>
    <div className="flex h-[21px] shrink-0 items-center gap-[15px] pl-[9px] text-[#c8c8c8]">
      <span>Display</span>
      <span>Show</span>
      <span>Help</span>
    </div>
    <div className="flex h-[25px] shrink-0 items-center pt-[4px] pl-[7px]">
      <svg width="16" height="16" viewBox="0 0 16 16">
        <rect x="1.5" y="1.5" width="13" height="13" stroke="#6c6c6c" strokeWidth="1.5" strokeDasharray="3 2" fill="none" />
      </svg>
      <div className="ml-[6px] flex h-[18px] w-[228px] items-center justify-between rounded-[2px] bg-[#2c2c2c] px-[3px] text-[#808080]">
        Search...
        <DownTri c="#aaa" />
      </div>
    </div>
    <div className="relative ml-[2px] flex w-[256px] flex-1 flex-col bg-[#383838]">
      {rows.map((r) => (
        <div key={r.n} className="flex h-[20px] shrink-0 items-center">
          <div className="w-[22px] shrink-0" />
          {r.child ? (
            <svg width="26" height="20" viewBox="0 0 26 20" className="shrink-0">
              <path d={`M3.5 0 V${r.child === 'mid' ? 20 : 10} M3.5 10 H14`} stroke="#808080" fill="none" />
              <circle cx="14" cy="10" r="2" fill="#808080" />
            </svg>
          ) : (
            <div className="flex w-[14px] shrink-0 items-center justify-start">
              {r.exp && (
                <svg width="9" height="9" viewBox="0 0 9 9">
                  <rect x=".5" y=".5" width="8" height="8" stroke="#999" fill="none" />
                  <path d={r.exp === '+' ? 'M2 4.5 H7 M4.5 2 V7' : 'M2 4.5 H7'} stroke="#999" />
                </svg>
              )}
            </div>
          )}
          <div className="flex w-[17px] shrink-0 items-center justify-center">{outlinerIcon[r.i]}</div>
          <span className={`ml-[2px] whitespace-nowrap ${r.dim ? 'text-[#6c6c6c]' : 'text-[#c8c8c8]'}`}>{r.n}</span>
        </div>
      ))}
      <div className="absolute top-0 right-0 bottom-[10px] flex w-[10px] flex-col items-center">
        <DownTri className="mt-[3px] rotate-180 scale-90" c="#aaa" />
        <div className="mt-[3px] w-[10px] flex-1 rounded-[4px] bg-[#5a5a5a]" />
        <DownTri className="mt-[3px] mb-[3px] scale-90" c="#aaa" />
      </div>
      <div className="absolute right-[12px] bottom-0 left-[2px] flex h-[10px] items-center bg-[#404040]">
        <svg width="6" height="8" viewBox="0 0 6 8">
          <path d="M6 0 V8 L0 4 Z" fill="#aaa" />
        </svg>
        <div className="mx-[5px] h-[10px] flex-1 rounded-[4px] bg-[#5a5a5a]" />
        <svg width="6" height="8" viewBox="0 0 6 8">
          <path d="M0 0 V8 L6 4 Z" fill="#aaa" />
        </svg>
      </div>
    </div>
    <div className="flex h-[5px] shrink-0 justify-center">
      <div className="mt-[1px] h-px w-[85px] border-t border-dotted border-[#777]" />
    </div>
    <div className="h-[4px] shrink-0" />
  </div>
);

const VI = ({ w = 19, on, dark, children }: { w?: number; on?: boolean; dark?: boolean; children: ReactNode }) => (
  <div style={{ width: w }} className={`flex h-[18px] shrink-0 items-center justify-center ${on ? 'bg-[#5285a6]' : ''} ${dark ? 'outline outline-1 -outline-offset-1 outline-[#2e2e2e]' : ''}`}>
    <svg width="15" height="15" viewBox="0 0 15 15" fill="none">
      {children}
    </svg>
  </div>
);

const ViewToolbar = () => (
  <div className="flex h-[22px] shrink-0 items-center pl-[2px]">
    <Sep />
    <div className="ml-[4px] flex h-[17px] w-[14px] items-center justify-center rounded-[2px] bg-[#3c9fd0] text-[9px] font-bold text-white">A</div>
    <VI w={23}><rect x="2" y="2" width="11" height="11" fill={TE} stroke={GR} /></VI>
    <VI><rect x="2" y="2" width="11" height="11" fill="#555" stroke="#555" /></VI>
    <VI><circle cx="7.5" cy="7.5" r="6" fill="#696969" /></VI>
    <VI><path d="M2 4 H13 V13 H2 Z" fill="#5e6b5e" stroke="#666" /></VI>
    <Sep className="ml-[3px]" />
    <VI w={20}><rect x="1" y="4" width="9" height="7" fill={GR} /><path d="M10 7.5 L14 4 V11 Z" fill={GR} /></VI>
    <VI><rect x="7" y="2" width="6" height="5" fill={GR} /><rect x="2" y="8" width="6" height="6" fill={TE} /><path d="M3 8 V5 H7 V8" stroke={TE} /></VI>
    <VI><circle cx="5" cy="9" r="3.5" stroke={TE} strokeWidth="2" /><rect x="7" y="3" width="7" height="5" fill={GR} /></VI>
    <VI><path d="M5 1 H10 V14 L7.5 11 L5 14 Z" fill={GR} /></VI>
    <VI><path d="M2 13 L8 2 V13 Z M10 7 L14 13 H9" stroke={GR} /></VI>
    <VI><circle cx="6" cy="9" r="3.5" stroke={TE} strokeWidth="1.5" /><path d="M8.5 11.5 L12 14 M8 1 V6 M5.5 3.5 H11" stroke={GR} /></VI>
    <VI><path d="M5 9 L12 2 L14 4 L7 11 Z" fill={TE} /><path d="M2 13 L5 9 L7 11 Z" fill={GR} /></VI>
    <Sep className="ml-[3px]" />
    <div className="ml-[4px] flex">
      <VI on><rect x="2" y="2" width="11" height="11" stroke="#eee" /><path d="M5.5 2 V13 M9 2 V13 M2 5.5 H13 M2 9 H13" stroke="#eee" /></VI>
      <VI><rect x="1" y="2" width="13" height="11" stroke={GR} /><path d="M1 4.5 H14 M1 10.5 H14" stroke={GR} strokeDasharray="1.5 1" /></VI>
      <VI><rect x="1" y="2" width="13" height="11" stroke={GR} /><circle cx="7.5" cy="7.5" r="2.5" fill={TE} /></VI>
      <VI dark><circle cx="7.5" cy="7.5" r="4" fill="#5a5a5a" /></VI>
      <VI><rect x="1" y="2" width="13" height="11" stroke={GR} strokeDasharray="3 1" /><path d="M1 7.5 H14 M7.5 2 V13" stroke={TE} strokeDasharray="2 1" /></VI>
      <VI><rect x="1" y="2" width="13" height="11" stroke={GR} /><path d="M3 11 L7 5 L9 11 Z" fill={TE} /><circle cx="10.5" cy="5.5" r="2" fill={TE} /></VI>
      <VI><rect x="1" y="2" width="13" height="11" stroke={GR} /><path d="M4 4.5 H11 M7.5 4.5 V11" stroke={TE} strokeWidth="2" /></VI>
    </div>
    <Sep className="ml-[3px]" />
    <div className="ml-[4px] flex">
      <VI><path d="M7.5 1 L13 4 V11 L7.5 14 L2 11 V4 Z M2 4 L7.5 7 L13 4 M7.5 7 V14" stroke={GR} /></VI>
      <VI on><path d="M7.5 1 L13 4 V11 L7.5 14 L2 11 V4 Z" fill={TE} stroke="#ddd" /><path d="M2 4 L7.5 7 L13 4 M7.5 7 V14" stroke="#ddd" /></VI>
      <VI><circle cx="7.5" cy="7.5" r="6" fill={GR} /><path d="M7.5 1.5 C4 4 4 11 7.5 13.5" stroke="#555" /></VI>
      <VI on><path d="M7.5 1 L13 4 V11 L7.5 14 L2 11 V4 Z" fill="#3d5f78" stroke="#ddd" /><path d="M4 5 L7.5 7 L11 5 M7.5 7 V12" stroke={TE} /></VI>
      <VI><circle cx="7.5" cy="7.5" r="6" fill={GR} /><path d="M1.5 5 H13.5 M1.5 10 H13.5 M5 1.5 V13.5 M10 1.5 V13.5" stroke="#444" strokeWidth="2" strokeDasharray="1.5 1.5" /></VI>
      <VI><circle cx="7.5" cy="6" r="3.5" fill={GR} /><path d="M6 10 H9 V13 H6 Z M1 6 H3 M12 6 H14 M3 2 L4 3 M12 2 L11 3" stroke={GR} /></VI>
      <VI><circle cx="9" cy="7" r="4.5" fill="#3d5d63" /><circle cx="4" cy="11" r="2" fill="#555" /></VI>
    </div>
    <Sep className="ml-[3px]" />
    <div className="ml-[4px] flex">
      <VI><circle cx="7.5" cy="5.5" r="4.5" fill="#aaa" /><path d="M3 10 L7.5 13 L12 10" stroke={TE} strokeWidth="1.5" /></VI>
      <VI><circle cx="9" cy="5" r="4" fill="#aaa" /><circle cx="5" cy="10" r="4" fill="#666" /></VI>
      <VI><circle cx="7.5" cy="7.5" r="5" stroke={TE} strokeWidth="2" strokeDasharray="9 3" /></VI>
      <VI dark><rect x="3" y="5" width="9" height="8" fill="#3f5459" /><rect x="2" y="2" width="7" height="7" fill="#444" /></VI>
    </div>
    <Sep className="ml-[3px]" />
    <VI w={22}><rect x="2" y="2" width="9" height="9" stroke={TE} strokeDasharray="2 1" /><Cursor x={8} y={5} k={0.8} /></VI>
    <Sep className="ml-[2px]" />
    <Sep className="ml-[3px]" />
  </div>
);

const lerp = (a: number, b: number, t: number) => a + (b - a) * t;
type P = [number, number];
const qb = (a: P, c: P, b: P, t: number): P => [
  (1 - t) * (1 - t) * a[0] + 2 * (1 - t) * t * c[0] + t * t * b[0],
  (1 - t) * (1 - t) * a[1] + 2 * (1 - t) * t * c[1] + t * t * b[1],
];

const range = (n: number) => Array.from({ length: n }, (_, i) => i);

// each corner of the tv: rect corner, inner rounded arc, outer rounded arc
const corners: { c: P; i: [P, P, P]; o: [P, P, P] }[] = [
  { c: [542, 498], i: [[519, 503], [520, 476], [546, 476]], o: [[505, 498], [505, 466], [534, 466]] },
  { c: [742, 498], i: [[767, 503], [766, 476], [742, 476]], o: [[782, 498], [782, 466], [754, 466]] },
  { c: [548, 628], i: [[525, 625], [526, 651], [552, 651]], o: [[511, 632], [514, 660], [540, 660]] },
  { c: [737, 629], i: [[762, 625], [761, 651], [738, 651]], o: [[778, 632], [775, 660], [748, 660]] },
];

const Leg = ({ tl, tr, bl, br, n = 9 }: { tl: P; tr: P; bl: P; br: P; n?: number }) => (
  <g>
    <path d={`M${tl[0]} ${tl[1]} L${tr[0]} ${tr[1]} L${br[0]} ${br[1]} Q${(br[0] + bl[0]) / 2} ${br[1] + 3} ${bl[0]} ${bl[1]} Z`} fill="#8e8e98" stroke={NAVY} strokeWidth="1.2" />
    {range(n).map((i) => {
      const t = (i + 1) / (n + 1);
      return <path key={i} d={`M${lerp(tl[0], tr[0], t)} ${tl[1]} L${lerp(bl[0], br[0], t)} ${bl[1]}`} stroke={NAVY} strokeWidth=".9" />;
    })}
  </g>
);

const Antenna = ({ a, b }: { a: P; b: P }) => (
  <g>
    <path d={`M${a[0]} ${a[1]} L${b[0]} ${b[1]}`} stroke={NAVY} strokeWidth="4.4" />
    <path d={`M${a[0]} ${a[1]} L${b[0]} ${b[1]}`} stroke="#8b8ba4" strokeWidth="2.6" />
    <path d={`M${a[0]} ${a[1]} L${b[0]} ${b[1]}`} stroke={NAVY} strokeWidth=".7" />
    <path d={`M${a[0]} ${a[1]} L${lerp(a[0], b[0], 0.05)} ${lerp(a[1], b[1], 0.05)}`} stroke={NAVY} strokeWidth="7" />
    <path d={`M${a[0]} ${a[1]} L${lerp(a[0], b[0], 0.05)} ${lerp(a[1], b[1], 0.05)}`} stroke="#9a9aa8" strokeWidth="5" />
  </g>
);

const Scene = () => {
  const vx = 645;
  const vy = 470;
  return (
    <svg viewBox="318 200 671 701" className="block h-[701px] w-[671px]">
      <defs>
        <linearGradient id="body" x1="0" y1="0" x2="0" y2="1">
          <stop offset="0" stopColor="#8b8b8b" />
          <stop offset="1" stopColor="#959595" />
        </linearGradient>
        <radialGradient id="dome" cx=".5" cy=".8" r=".6">
          <stop offset="0" stopColor="#b5b5b5" />
          <stop offset="1" stopColor="#6f6f7a" />
        </radialGradient>
        <linearGradient id="cube" x1="0" y1="0" x2="0" y2="1">
          <stop offset="0" stopColor="#b8b8b8" />
          <stop offset="1" stopColor="#989898" />
        </linearGradient>
      </defs>
      <rect x="318" y="200" width="671" height="701" fill="#5c5c5c" />
      {/* ground grid */}
      <g stroke="#4a4a4a" strokeWidth="1">
        {[517, 523, 531, 538, 548, 559, 571, 588, 608, 634, 668].map((y) => (
          <path key={y} d={`M318 ${y} H989`} />
        ))}
        {range(31).map((i) => {
          const x = (i - 15) * 110;
          const t = (517 - vy) / (700 - vy);
          return <path key={i} d={`M${vx + x * t} 517 L${vx + x} 700`} />;
        })}
      </g>
      {/* floor */}
      <path d="M318 661 L956 667 L989 695 V901 H318 Z" fill="#0f8275" />
      <g stroke={NAVY} strokeWidth="1.6" fill="none">
        <path d="M318 661 L956 667 L989 695" />
        <path d="M318 711.5 L989 720.5" strokeWidth="2" />
        <path d="M318 790.5 L989 803" strokeWidth="2" />
        <path d="M479 662 L439 712" />
        <path d="M580 716 L555 794" />
        <path d="M872 720 L926 801" />
        <path d="M740 799 L757 901" strokeWidth="2" />
        <path d="M372 793 L318 859" />
      </g>
      {/* axis */}
      <path d="M343.5 860 V875" stroke="#0f0" />
      <path d="M343.5 875 H357" stroke="#1a3cff" />
      <path d="M341 866 L346 872 M346 866 L341 872" stroke="#e01010" />
      <text x="343" y="858" textAnchor="middle" fill="#12e812" fontSize="10" fontFamily="'Noto Sans', sans-serif">y</text>
      <text x="360" y="875" textAnchor="middle" fill="#1a3cff" fontSize="10" fontFamily="'Noto Sans', sans-serif">z</text>
      <text x="646" y="892" textAnchor="middle" fill="#ececec" fontSize="10" fontWeight="700" fontFamily="'Noto Sans', sans-serif">persp</text>
      {/* legs */}
      <Leg tl={[578, 655]} tr={[587, 655]} bl={[577, 687]} br={[582, 687]} n={3} />
      <Leg tl={[550, 656]} tr={[581, 656]} bl={[541, 751]} br={[558, 751]} />
      <Leg tl={[704, 656]} tr={[736, 656]} bl={[731, 753]} br={[748, 753]} />
      {/* antennas */}
      <Antenna a={[507, 244]} b={[628, 434]} />
      <Antenna a={[786, 243]} b={[666, 434]} />
      {/* slab and body */}
      <path d="M530 467 L562 457 H738 L763 467 Z" fill="#8a8a8a" stroke={NAVY} strokeWidth="1.2" />
      <path d="M534 466 L754 466 C772 466 782 478 782 498 L778 632 C777 650 765 660 748 660 L540 660 C522 660 513 650 511 632 L505 498 C505 478 516 466 534 466 Z" fill="url(#body)" stroke={NAVY} strokeWidth="2" />
      <path d="M509 498 C509 480 518 469 534 469 H754 C770 469 779 480 779 498 L775 632 C774 648 763 657 748 657 H540 C524 657 515 648 514 632 Z" fill="none" stroke={NAVY} strokeWidth="1" />
      {corners.map((k, idx) => (
        <g key={idx} stroke={NAVY} strokeWidth=".9">
          {range(14).map((i) => {
            const t = i / 13;
            const p = qb(k.i[0], k.i[1], k.i[2], t);
            const q = qb(k.o[0], k.o[1], k.o[2], t);
            return <path key={i} d={`M${p[0]} ${p[1]} L${q[0]} ${q[1]}`} />;
          })}
          {range(11).map((i) => {
            const p = qb(k.i[0], k.i[1], k.i[2], i / 10);
            return <path key={i} d={`M${k.c[0]} ${k.c[1]} L${p[0]} ${p[1]}`} />;
          })}
        </g>
      ))}
      <path d="M546 476 H742 C758 476 767 487 767 503 L762 625 C761 642 752 651 738 651 H552 C535 651 526 642 525 625 L519 503 C519 487 530 476 546 476 Z" fill="none" stroke={NAVY} strokeWidth="3.5" />
      <g stroke={NAVY} fill="none">
        <path d="M546 476 L550 650 M742 476 L737 650" />
        <path d="M520 497.5 H766 M526 628 H762" />
        <path d="M532 470.5 H756" strokeWidth="2.5" />
        <path d="M540 654 H750" strokeWidth="1.5" />
      </g>
      {/* dome */}
      <path d="M610.5 463 C610.5 440 628 427 646 427 C664 427 681.5 440 681.5 463 Z" fill="url(#dome)" stroke={NAVY} strokeWidth="1.6" />
      <g stroke={NAVY} strokeWidth=".9" fill="none">
        {[433, 440, 447, 455].map((y) => {
          const t = (463 - y) / 36;
          const w = 35.5 * Math.sqrt(1 - t * t);
          return <path key={y} d={`M${646 - w} ${y} Q646 ${y + 3} ${646 + w} ${y}`} />;
        })}
        {[-28, -18, -9, 0, 9, 18, 28].map((d) => (
          <path key={d} d={`M${646 + d} 463 Q${646 + d} 437 ${646 + d * 0.35} 427`} />
        ))}
      </g>
      {/* view cube */}
      <path d="M907 237 L909 234 H953 L955 237 Z" fill="#c8c8c8" />
      <rect x="905" y="237" width="50" height="49" fill="url(#cube)" stroke="#7c7c7c" strokeWidth=".6" />
      <text x="930" y="265" textAnchor="middle" fill="#6c6c6c" fontSize="9.5" fontWeight="700" fontFamily="'Noto Sans', sans-serif">LEFT</text>
    </svg>
  );
};

const Viewport = () => (
  <div className="mt-[2px] mb-[3px] flex w-[673px] shrink-0 flex-col border border-[#8c8c8c] bg-[#444]">
    <div className="flex h-[17px] shrink-0 items-center gap-[15.6px] pl-[8px] text-[#c8c8c8]">
      {['View', 'Shading', 'Lighting', 'Show', 'Renderer', 'Panels'].map((m) => (
        <span key={m}>{m}</span>
      ))}
    </div>
    <ViewToolbar />
    <Scene />
  </div>
);

const VTab = ({ on, h, children, className = '' }: { on?: boolean; h: number; children: ReactNode; className?: string }) => (
  <div style={{ height: h }} className={`flex w-[17px] shrink-0 items-center justify-center rounded-r-[2px] border-y border-r border-[#383838] ${on ? 'bg-[#444] text-[#d6d6d6]' : 'bg-[#484848] text-[#8c8c8c]'} ${className}`}>
    <span className="whitespace-nowrap [writing-mode:vertical-rl]">{children}</span>
  </div>
);

const RightPanel = () => (
  <div className="flex min-w-0 flex-1">
    <div className="w-[3px] shrink-0 bg-[#3d3d3d]" />
    <div className="flex min-w-0 flex-1 flex-col">
      <div className="flex h-[22px] shrink-0 items-center justify-end gap-[6px] pr-[3px]">
        <svg width="15" height="15" viewBox="0 0 15 15">
          <path d="M7.5 1 L10 5 H5 Z" fill="#7dae3a" />
          <path d="M1 12 L5 8 L6 13 Z" fill="#4a7ad8" />
          <path d="M14 12 L10 8 L9 13 Z" fill="#e04848" />
          <rect x="5.5" y="6" width="4" height="4" fill="#c9c9c9" />
        </svg>
        <svg width="15" height="15" viewBox="0 0 15 15">
          <path d="M1 10 A6.5 6.5 0 1 1 14 10" stroke={TE} strokeWidth="3.2" fill="none" />
          <rect x="4" y="10" width="7" height="4" fill="#666" />
        </svg>
        <svg width="15" height="15" viewBox="0 0 15 15">
          <path d="M1 1 V14 H14" stroke="#777" fill="none" />
          <path d="M3 12 L13 2" stroke={TE} strokeWidth="1.5" />
          <path d="M9 1 H14 V6 Z" fill={TE} />
        </svg>
      </div>
      <div className="flex h-[19px] shrink-0 items-center gap-[15.5px] pl-[11px] text-[#c8c8c8]">
        <span>Channels</span>
        <span>Edit</span>
        <span>Object</span>
        <span>Show</span>
      </div>
      <div className="mt-[128px] text-center text-[11.2px] leading-[13px] font-bold text-[#bdbdbd]" style={{ fontFamily: 'Roboto, sans-serif' }}>
        Select objects in the scene to view,
        <br />
        edit and set keyframes on channels
        <br />
        (attributes)
      </div>
      <div className="mt-[127px] h-px w-[85px] self-center border-t border-dotted border-[#777]" />
      <div className="mt-[8px] mb-[7px] ml-[3px] flex min-h-0 flex-1 flex-col bg-[#3b3b3b]">
        <div className="flex h-[18px] shrink-0 items-end gap-[2px] pl-[2px]">
          <div className="flex h-[16px] w-[58px] items-center justify-center rounded-t-[2px] bg-[#444] text-[#e4e4e4]">Display</div>
          <div className="flex h-[15px] w-[46px] items-center justify-center rounded-t-[2px] border border-b-0 border-[#333] text-[#8c8c8c]">Anim</div>
        </div>
        <div className="flex min-h-0 flex-1 flex-col border-x border-[#3a3a3a] bg-[#444]">
          <div className="flex h-[22px] shrink-0 items-center gap-[13.8px] pb-[1px] pl-[10px] text-[#c8c8c8]">
            <span>Layers</span>
            <span>Options</span>
            <span>Help</span>
          </div>
          <div className="flex h-[25px] shrink-0 items-center justify-end gap-[7px] pr-[8px] pb-[6px]">
            {[
              <path key="a" d="M9 5 L12 1 L15 5 H13 V9 H11 V5 Z" fill={TE} />,
              <path key="b" d="M9 5 L12 9 L15 5 H13 V1 H11 V5 Z" fill={TE} />,
              <path key="c" d="M11 0 H13 V2 H15 V4 H13 V6 H11 V4 H9 V2 H11 Z" fill={TE} />,
              <circle key="d" cx="12" cy="4" r="3" fill={TE} />,
            ].map((x, i) => (
              <svg key={i} width="16" height="12" viewBox="0 0 16 12" className={i === 2 ? 'ml-[4px]' : ''}>
                <path d="M6 3 L11 7 L6 11 L0 7 Z" fill="#bcbcbc" />
                {x}
              </svg>
            ))}
          </div>
          <div className="mx-[3px] min-h-0 flex-1 bg-[#2b2b2b]" />
          <div className="mx-[3px] flex h-[14px] shrink-0 items-center pt-[2px]">
            <svg width="6" height="8" viewBox="0 0 6 8">
              <path d="M6 0 V8 L0 4 Z" fill="#aaa" />
            </svg>
            <div className="ml-[7px] h-[10px] w-[153px] rounded-[4px] bg-[#5a5a5a]" />
            <svg width="6" height="8" viewBox="0 0 6 8" className="ml-auto mr-[4px]">
              <path d="M0 0 V8 L6 4 Z" fill="#aaa" />
            </svg>
          </div>
        </div>
      </div>
    </div>
    <div className="ml-[2px] flex w-[17px] shrink-0 flex-col">
      <div className="h-[2px] shrink-0" />
      <VTab on h={156} className="pb-[4px]">Channel Box / Layer Editor</VTab>
      <VTab h={103}>Attribute Editor</VTab>
      <VTab h={110}>Modeling Toolkit</VTab>
    </div>
  </div>
);

const tickCells = range(24);

const Timeline = () => (
  <div className="flex h-[50px] shrink-0 items-stretch pt-[2px] pl-[4px]">
    <Grip className="mb-[1px]" />
    <div className="relative ml-[7px] flex w-[968px] shrink-0 flex-col overflow-hidden">
      <div className="flex h-[8px] shrink-0 pl-[39.5px]">
        {tickCells.map((i) => (
          <div key={i} className="w-[39.6px] shrink-0 border-l border-[#2b2b2b]" />
        ))}
      </div>
      <div className="flex h-[32px] shrink-0 bg-[#2b2b2b] pl-[39.5px]">
        {tickCells.map((i) => (
          <div key={i} className="flex w-[39.6px] shrink-0 flex-col justify-between">
            <span className="ml-[7px] h-[16px] leading-[15px] whitespace-nowrap text-[#a8a8a8]">{(i + 1) * 5}</span>
            <div className="h-[15px] w-px bg-[#8a8a8a]" />
          </div>
        ))}
      </div>
      <div className="flex h-[8px] shrink-0 pl-[39.5px]">
        {tickCells.map((i) => (
          <div key={i} className="w-[39.6px] shrink-0 border-l border-[#2b2b2b]" />
        ))}
      </div>
      <div className="absolute top-0 bottom-0 left-[8px] w-[8px] bg-[#6a6a6a]/40" />
      <div className="absolute top-[23px] left-[14px] flex h-[14px] w-[8px] items-center justify-center rounded-[2px] bg-[#222] text-[#dfffe8]">1</div>
    </div>
    <div className="ml-[5px] mt-[14px] flex h-[20px] w-[50px] shrink-0 items-center rounded-[2px] bg-[#2b2b2b] pl-[4px] text-[#c8c8c8]">1</div>
    <div className="ml-[4px] mt-[13px] flex h-[20px] items-center">
      {[
        <path key="1" d="M3 2 V14 H4 V2 Z M11 3 L5 8 L11 13 Z M16 3 L10 8 L16 13 Z" fill="#999" />,
        <path key="2" d="M4 2 V14 H5 V2 Z M15 3 L7 8 L15 13 Z" fill="#999" />,
        <path key="3" d="M4 0 V16 H6 V0 Z M15 3 L7 8 L15 13 Z" fill="#999" />,
        <path key="4" d="M14 1 L4 8 L14 15 Z" fill="#a0a0a0" />,
        <path key="5" d="M4 1 L14 8 L4 15 Z" fill="#c8c8c8" />,
        <path key="6" d="M3 3 L11 8 L3 13 Z M12 0 V16 H14 V0 Z" fill="#999" />,
        <path key="7" d="M3 3 L11 8 L3 13 Z M13 2 V14 H14 V2 Z" fill="#999" />,
        <path key="8" d="M1 3 L7 8 L1 13 Z M6 3 L12 8 L6 13 Z M14 2 V14 H15 V2 Z" fill="#999" />,
      ].map((p, i) => (
        <svg key={i} width="28" height="16" viewBox="0 0 18 16" className="shrink-0">
          {p}
          {i === 2 && <path d="M4 0 V16 H6 V0 Z" fill="#d4803c" />}
          {i === 5 && <path d="M12 0 V16 H14 V0 Z" fill="#d4803c" />}
        </svg>
      ))}
    </div>
  </div>
);

const NumField = ({ w, children }: { w: number; children: ReactNode }) => (
  <div style={{ width: w }} className="flex h-[20px] shrink-0 items-center rounded-[2px] bg-[#2b2b2b] pl-[4px] text-[#c8c8c8]">
    {children}
  </div>
);

const RangeBar = () => (
  <div className="flex h-[34px] shrink-0 items-center pl-[4px]">
    <Grip className="h-[28px]" />
    <div className="ml-[8px]">
      <NumField w={50}>1</NumField>
    </div>
    <div className="ml-[9px] flex h-[20px] w-[440px] shrink-0 items-center rounded-[2px] bg-[#2b2b2b] pl-[2px] text-[#c8c8c8]">
      <div className="flex h-[16px] w-[274px] items-center justify-between bg-[#424242] pr-[8px]">
        <div className="h-full w-[8px] bg-[#a0a0a0]" />
        <span className="mr-[0px] ml-[9px]">1</span>
        <div className="ml-[115px] h-[10px] w-[3px] border-x border-dotted border-[#777]" />
        <span className="ml-auto mr-[8px]">120</span>
        <div className="-mr-[8px] h-full w-[8px] bg-[#a0a0a0]" />
      </div>
    </div>
    <div className="ml-[10px]">
      <NumField w={50}>200</NumField>
    </div>
    <Sep className="ml-[19px]" />
    <svg width="16" height="18" viewBox="0 0 16 18" className="ml-[24px]">
      <path d="M1 2 H9 V16 L5 13 L1 16 Z" fill="#de6f3c" />
      <path d="M9 1 V7 M6 4 H13" stroke="#d8d8d8" strokeWidth="2" />
    </svg>
    <Sep className="ml-[19px]" />
    <div className="ml-[21px] flex items-center">
      <svg width="10" height="7" viewBox="0 0 10 7">
        <path d="M.5 .5 H9.5 L5 6.5 Z" stroke="#999" fill="none" />
      </svg>
    </div>
    <div className="ml-[8px]">
      <Outlined w={101}>No Character Set</Outlined>
    </div>
    <svg width="10" height="7" viewBox="0 0 10 7" className="ml-[13px]">
      <path d="M.5 .5 H9.5 L5 6.5 Z" stroke="#999" fill="none" />
    </svg>
    <div className="ml-[8px]">
      <Outlined w={101}>No Anim Layer</Outlined>
    </div>
    <Sep className="ml-[19px]" />
    <div className="ml-[21px] flex h-[20px] w-[95px] shrink-0 items-center bg-[#5e5e5e] pl-[3px] text-[#c8c8c8]">
      24 fps
      <div className="ml-auto flex h-full w-[20px] items-center justify-center border-l border-[#444]">
        <DownTri c="#bdbdbd" />
      </div>
    </div>
    <svg width="18" height="16" viewBox="0 0 18 16" className="ml-[15px]">
      <path d="M3 9 V6 C3 4 5 3 6 3 H15 M15 7 V10 C15 12 13 13 12 13 H3" stroke={GR} strokeWidth="2" fill="none" />
      <path d="M13 0 L17 3 L13 6 Z M5 10 L1 13 L5 16 Z" fill={GR} />
    </svg>
    <svg width="18" height="18" viewBox="0 0 18 18" className="ml-[14px]">
      <rect x="1" y="4" width="15" height="13" fill="#d9843d" />
      <path d="M1 7 H16 M1 14 H16" stroke="#333" strokeDasharray="2 1" />
      <rect x="3" y="8" width="3" height="5" fill="#333" />
      <rect x="7" y="8" width="3" height="5" fill="#333" />
      <path d="M11 0 L17 4 L11 8 Z" fill={GR} />
    </svg>
    <Sep className="ml-[21px]" />
    <svg width="18" height="16" viewBox="0 0 18 16" className="ml-[21px]">
      <path d="M1 5.5 H4 L9 1.5 V14.5 L4 10.5 H1 Z" fill={GR} />
      <path d="M11 4 C13 6 13 10 11 12 M13 2 C16 5 16 11 13 14" stroke={GR} fill="none" />
    </svg>
    <svg width="18" height="18" viewBox="0 0 18 18" className="ml-[10px]">
      <circle cx="9" cy="9" r="7.5" stroke="#bbb" strokeDasharray="7 3" fill="none" />
      <path d="M9 4 V10" stroke="#e06a30" strokeWidth="2" />
      <circle cx="9" cy="13" r="1" fill="#e06a30" />
    </svg>
    <svg width="18" height="20" viewBox="0 0 18 20" className="ml-[11px]">
      <circle cx="5" cy="5" r="3" stroke="#bbb" strokeWidth="1.5" fill="none" />
      <circle cx="13" cy="5" r="2.5" fill="#e0843a" />
      <path d="M5 12 L11 9 L13 14 L8 14 L10 19 M11 14 L4 19 M12 10 L17 12" stroke="#e0843a" strokeWidth="2" fill="none" />
    </svg>
  </div>
);

const HelpLine = () => (
  <div className="flex h-[37px] shrink-0 items-center pl-[4px] text-[#c8c8c8]">
    <Grip className="h-[33px]" />
    <div className="ml-[7px] flex h-[16px] w-[16px] shrink-0 items-center justify-center rounded-full bg-[#8ab33c] text-[12px] font-bold text-[#333]">?</div>
    <span className="ml-[8px] w-[613px] shrink-0 pt-[1px] text-[9.6px] whitespace-nowrap text-[#dcdcdc]" style={{ fontFamily: 'Roboto, sans-serif' }}>
      Scale Tool: Select an object to scale.
    </span>
    <svg width="14" height="14" viewBox="0 0 14 14" className="mt-[21px] shrink-0">
      <path d="M1 14 L14 1 M5 14 L14 5 M9 14 L14 9" stroke="#777" />
    </svg>
    <div className="h-full w-px shrink-0 bg-[#333]" />
    <Grip className="ml-[4px] h-[29px]" />
    <span className="ml-[7px] shrink-0 text-[#dcdcdc]">MEL</span>
    <div className="ml-[8px] flex h-[20px] w-[201px] shrink-0 rounded-[2px] bg-[#2b2b2b]" />
    <div className="ml-[5px] flex h-[20px] w-[314px] shrink-0 rounded-[2px] bg-[#2b2b2b]" />
    <div className="ml-[9px] flex h-[18px] w-[19px] shrink-0 flex-col">
      <div className="h-[3px] bg-[#c9c9c9]" />
      <div className="mt-px flex-1 bg-[#c9c9c9] text-center text-[10px] leading-[13px] font-bold text-[#333]">{'{;}'}</div>
    </div>
  </div>
);

export default function App() {
  return (
    <div
      className="flex h-[1032px] w-[1273px] flex-col overflow-hidden bg-gradient-to-b from-[#1c2c1c] via-[#3f7d34] to-[#7f9c3a] pb-[1px] pl-[2px] text-[11px] leading-none"
      style={{ fontFamily: "'Noto Sans', sans-serif" }}
    >
      <TitleBar />
      <div className="flex min-h-0 flex-1 flex-col bg-[#444]">
        <MenuBar />
        <StatusBar />
        <div className="h-[3px] shrink-0 bg-[#3a3a3a]" />
        <Shelf />
        <div className="h-[3px] shrink-0 bg-[#3a3a3a]" />
        <div className="flex h-[747px] shrink-0">
          <Toolbox />
          <div className="w-[3px] shrink-0 bg-[#3d3d3d]" />
          <Outliner />
          <div className="w-[4px] shrink-0 bg-[#3d3d3d]" />
          <Viewport />
          <div className="w-[2px] shrink-0 bg-[#3d3d3d]" />
          <RightPanel />
        </div>
        <Timeline />
        <div className="h-[3px] shrink-0 bg-[#3a3a3a]" />
        <RangeBar />
        <div className="h-[2px] shrink-0 bg-[#3a3a3a]" />
        <HelpLine />
      </div>
    </div>
  );
}
